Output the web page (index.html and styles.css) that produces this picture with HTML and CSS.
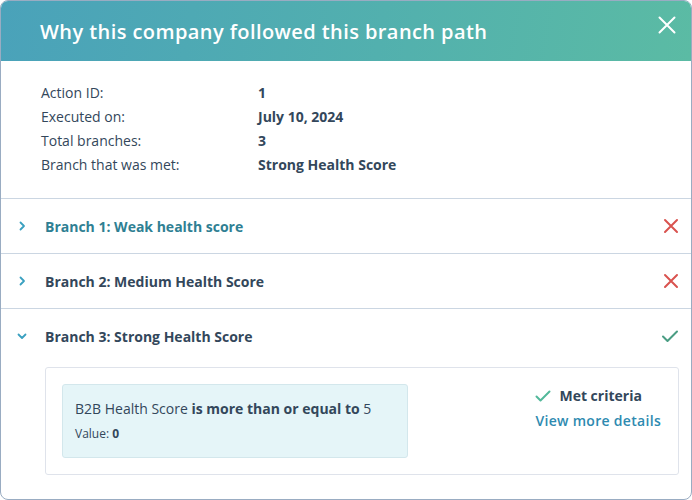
FILE: index.html
```html
<!DOCTYPE html>
<html>
<head>
<meta charset="utf-8">
<link rel="stylesheet" href="styles.css">
</head>
<body>
<div class="modal">
  <header class="modal-header">
    <h1 class="modal-title">Why this company followed this branch path</h1>
    <button class="close-btn" aria-label="Close">
      <svg width="18" height="18" viewBox="0 0 18 18"><path d="M1.5 1.5L16.5 16.5M16.5 1.5L1.5 16.5" stroke="#fff" stroke-width="2" stroke-linecap="round"/></svg>
    </button>
  </header>
  <section class="details">
    <div class="detail-label">Action ID:</div><div class="detail-value">1</div>
    <div class="detail-label">Executed on:</div><div class="detail-value">July 10, 2024</div>
    <div class="detail-label">Total branches:</div><div class="detail-value">3</div>
    <div class="detail-label">Branch that was met:</div><div class="detail-value">Strong Health Score</div>
  </section>
  <div class="branch">
    <div class="branch-head">
      <svg class="chev" width="10" height="10" viewBox="0 0 10 10"><path d="M3.5 1.5L7 5L3.5 8.5" fill="none" stroke="#3aa0c0" stroke-width="1.8" stroke-linecap="round" stroke-linejoin="round"/></svg>
      <span class="branch-title link">Branch 1: Weak health score</span>
      <svg class="status" width="16" height="16" viewBox="0 0 16 16"><path d="M2 2L14 14M14 2L2 14" stroke="#d9534f" stroke-width="2" stroke-linecap="round"/></svg>
    </div>
  </div>
  <div class="branch">
    <div class="branch-head">
      <svg class="chev" width="10" height="10" viewBox="0 0 10 10"><path d="M3.5 1.5L7 5L3.5 8.5" fill="none" stroke="#3aa0c0" stroke-width="1.8" stroke-linecap="round" stroke-linejoin="round"/></svg>
      <span class="branch-title">Branch 2: Medium Health Score</span>
      <svg class="status" width="16" height="16" viewBox="0 0 16 16"><path d="M2 2L14 14M14 2L2 14" stroke="#d9534f" stroke-width="2" stroke-linecap="round"/></svg>
    </div>
  </div>
  <div class="branch open">
    <div class="branch-head">
      <svg class="chev" width="10" height="10" viewBox="0 0 10 10"><path d="M1.5 3.5L5 7L8.5 3.5" fill="none" stroke="#3aa0c0" stroke-width="1.8" stroke-linecap="round" stroke-linejoin="round"/></svg>
      <span class="branch-title">Branch 3: Strong Health Score</span>
      <svg class="status" width="18" height="16" viewBox="0 0 18 16"><path d="M2 8.5L6.5 13L16 3.5" fill="none" stroke="#4a9d83" stroke-width="2" stroke-linecap="round" stroke-linejoin="round"/></svg>
    </div>
    <div class="branch-body">
      <div class="criteria">
        <p class="criteria-text">B2B Health Score <strong>is more than or equal to</strong> 5</p>
        <p class="criteria-value">Value: <strong>0</strong></p>
      </div>
      <div class="result">
        <div class="met">
          <svg width="16" height="14" viewBox="0 0 16 14"><path d="M1.5 7.5L5.5 11.5L14.5 2.5" fill="none" stroke="#52b89a" stroke-width="2" stroke-linecap="round" stroke-linejoin="round"/></svg>
          <span>Met criteria</span>
        </div>
        <a class="more-link" href="#">View more details</a>
      </div>
    </div>
  </div>
</div>
</body>
</html>
```

FILE: styles.css
```css
* { box-sizing: border-box; }
html, body { margin: 0; padding: 0; background: #ffffff; }
body {
  font-family: "Open Sans", "Lato", sans-serif;
  color: #33475b;
  width: 692px;
  height: 500px;
}
.modal {
  width: 692px;
  height: 500px;
  border: 1px solid #99acc2;
  border-radius: 8px;
  overflow: hidden;
  background: #fff;
}
.modal-header {
  height: 60px;
  background: linear-gradient(100deg, #4aa2ba 0%, #52b0ae 55%, #5bbba4 100%);
  display: flex;
  align-items: center;
  justify-content: space-between;
  padding: 0 12px 0 39px;
}
.modal-title {
  margin: 0;
  color: #fff;
  font-size: 20px;
  font-weight: 600;
  letter-spacing: 0.42px;
}
.close-btn {
  background: none;
  border: 0;
  padding: 0;
  width: 24px;
  height: 24px;
  display: flex;
  align-items: center;
  justify-content: center;
  margin-top: -12px;
}
.details {
  display: grid;
  grid-template-columns: 217px 1fr;
  row-gap: 0;
  padding: 20px 40px 21px 40px;
  font-size: 14px;
  line-height: 24px;
  border-bottom: 1px solid #cbd6e2;
}
.detail-value { font-weight: 700; }
.branch { border-bottom: 1px solid #cbd6e2; }
.branch.open { border-bottom: 0; }
.branch-head {
  height: 54px;
  display: flex;
  align-items: center;
  padding: 0 12px 0 16px;
}
.chev { margin-right: 18px; }
.branch-title {
  font-size: 14px;
  font-weight: 700;
  flex: 1;
}
.branch-title.link { color: #2f7f93; }
.branch-body {
  margin: 4px 12px 0 44px;
  border: 1px solid #dfe3eb;
  border-radius: 3px;
  padding: 16px 16px 16px 16px;
  display: flex;
  justify-content: space-between;
  height: 108px;
}
.criteria {
  width: 346px;
  background: #e5f5f8;
  border: 1px solid #d3e7ec;
  border-radius: 3px;
  padding: 13px 12px;
}
.criteria p { margin: 0; }
.criteria-text { font-size: 14px; line-height: 22px; }
.criteria-value { font-size: 12px; line-height: 18px; margin-top: 5px !important; }
.result { padding-top: 1px; margin-right: 1px; }
.met {
  display: flex;
  align-items: center;
  gap: 8px;
  font-size: 14px;
  font-weight: 700;
  line-height: 22px;
}
.more-link {
  display: block;
  color: #2e8ab0;
  font-size: 14px;
  font-weight: 600;
  letter-spacing: 0.3px;
  text-decoration: none;
  line-height: 24px;
  margin-top: 2px;
}
```
